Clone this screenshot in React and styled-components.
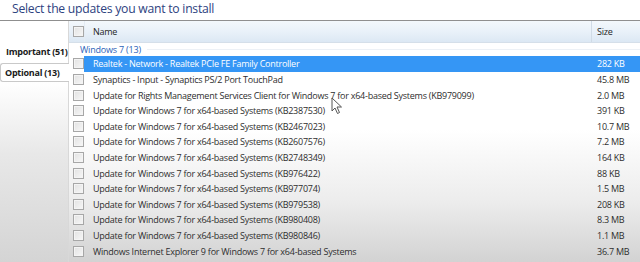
import React from "react";
import styled, { createGlobalStyle } from "styled-components";

const GlobalStyle = createGlobalStyle`
  html, body {
    margin: 0;
    padding: 0;
    background: #ffffff;
  }
  body {
    font-family: "Open Sans", "Noto Sans", sans-serif;
  }
`;

const Page = styled.div`
  position: relative;
  width: 640px;
  height: 262px;
  overflow: hidden;
  background: #fff;
`;

const Title = styled.div`
  height: 20px;
  padding-left: 12px;
  font-size: 12.2px;
  letter-spacing: -0.25px;
  line-height: 18px;
  color: #2d4280;
`;

const Body = styled.div`
  display: flex;
  height: 242px;
  border-top: 1px solid #8f8f8f;
`;

const Side = styled.div`
  width: 68px;
  flex-shrink: 0;
  padding-top: 21px;
  display: flex;
  flex-direction: column;
  gap: 2px;
  background: linear-gradient(to bottom, #ffffff 0%, #ffffff 25%, #e8e8e8 55%, #d4d4d4 100%);
  border-right: 1px solid #d8d8d8;
`;

const Tab = styled.div`
  height: 17px;
  padding-left: ${(p) => (p.$active ? "4px" : "5px")};
  font-size: 9px;
  letter-spacing: -0.25px;
  font-weight: 700;
  line-height: 17px;
  color: #1a1a1a;
  white-space: nowrap;
  background: ${(p) => (p.$active ? "#fff" : "transparent")};
  border: ${(p) => (p.$active ? "1px solid #c9c9c9" : "1px solid transparent")};
  border-right: none;
  border-radius: 3px 0 0 3px;
  margin-right: -1px;
`;

const List = styled.div`
  flex: 1;
  display: flex;
  flex-direction: column;
  background: linear-gradient(to bottom, #ffffff 0%, #ffffff 45%, #ececec 75%, #d2d2d2 100%);
`;

const Header = styled.div`
  display: flex;
  align-items: center;
  height: 21px;
  background: linear-gradient(to bottom, #f3f8fc 0%, #e9f1f9 50%, #dce8f4 100%);
  border-bottom: 1px solid #d5dfe9;
  font-size: 9px;
  letter-spacing: -0.25px;
  color: #1e1e1e;
`;

const CheckCell = styled.div`
  width: 16px;
  height: 100%;
  display: flex;
  align-items: center;
  padding-left: 4px;
  box-sizing: border-box;
  flex-shrink: 0;
  border-right: 1px solid ${(p) => (p.$header ? "#e4ecf4" : "transparent")};
`;

const NameCol = styled.div`
  flex: 1;
  padding-left: 8px;
  white-space: nowrap;
  overflow: hidden;
`;

const SizeCol = styled.div`
  width: 43px;
  flex-shrink: 0;
  padding-left: 5px;
  white-space: nowrap;
  border-left: 1px solid ${(p) => (p.$header ? "#d0dbe6" : "transparent")};
  height: 100%;
  display: flex;
  align-items: center;
`;

const Box = styled.span`
  display: block;
  width: 9px;
  height: 9px;
  border: 1px solid #a7a7a7;
  background: linear-gradient(135deg, #e2e2e2 0%, #f7f7f7 100%);
  box-shadow: inset 0 0 0 1px #f4f4f4;
`;

const Group = styled.div`
  display: flex;
  align-items: center;
  gap: 6px;
  height: 13px;
  padding-left: 11px;
  font-size: 9px;
  letter-spacing: -0.2px;
  color: #2a62b8;
  white-space: nowrap;

  &::after {
    content: "";
    flex: 1;
    height: 1px;
    background: #edf1f6;
  }
`;

const Row = styled.div`
  display: flex;
  align-items: center;
  height: 15.62px;
  font-size: 9px;
  letter-spacing: -0.25px;
  color: ${(p) => (p.$selected ? "#ffffff" : "#2e2e2e")};
`;

const RowFill = styled.div`
  flex: 1;
  display: flex;
  align-items: center;
  height: 100%;
  background: ${(p) => (p.$selected ? "#3596f5" : "transparent")};
  margin-left: -1px;

  ${NameCol} {
    padding-left: 9px;
  }
`;

const Cursor = styled.svg`
  position: absolute;
  left: 331px;
  top: 97px;
`;

const updates = [
  ["Realtek - Network - Realtek PCIe FE Family Controller", "282 KB"],
  ["Synaptics - Input - Synaptics PS/2 Port TouchPad", "45.8 MB"],
  ["Update for Rights Management Services Client for Windows 7 for x64-based Systems (KB979099)", "2.0 MB"],
  ["Update for Windows 7 for x64-based Systems (KB2387530)", "391 KB"],
  ["Update for Windows 7 for x64-based Systems (KB2467023)", "10.7 MB"],
  ["Update for Windows 7 for x64-based Systems (KB2607576)", "7.2 MB"],
  ["Update for Windows 7 for x64-based Systems (KB2748349)", "164 KB"],
  ["Update for Windows 7 for x64-based Systems (KB976422)", "88 KB"],
  ["Update for Windows 7 for x64-based Systems (KB977074)", "1.5 MB"],
  ["Update for Windows 7 for x64-based Systems (KB979538)", "208 KB"],
  ["Update for Windows 7 for x64-based Systems (KB980408)", "8.3 MB"],
  ["Update for Windows 7 for x64-based Systems (KB980846)", "1.1 MB"],
  ["Windows Internet Explorer 9 for Windows 7 for x64-based Systems", "36.7 MB"],
];

const App = () => {
  return (
    <Page>
      <GlobalStyle />
      <Title>Select the updates you want to install</Title>
      <Body>
        <Side>
          <Tab>Important (51)</Tab>
          <Tab $active>Optional (13)</Tab>
        </Side>
        <List>
          <Header>
            <CheckCell $header>
              <Box />
            </CheckCell>
            <NameCol>Name</NameCol>
            <SizeCol $header>Size</SizeCol>
          </Header>
          <Group>Windows 7 (13)</Group>
          {updates.map(([name, size], i) => (
            <Row key={i} $selected={i === 0}>
              <CheckCell>
                <Box />
              </CheckCell>
              <RowFill $selected={i === 0}>
                <NameCol>{name}</NameCol>
                <SizeCol>{size}</SizeCol>
              </RowFill>
            </Row>
          ))}
        </List>
      </Body>
      <Cursor width="12" height="18" viewBox="0 0 12 18">
        <path d="M1 1 L1 14 L4 11 L6.5 16.5 L8.5 15.5 L6 10 L10.5 10 Z" fill="#fff" stroke="#555" strokeWidth="1" strokeLinejoin="round" />
      </Cursor>
    </Page>
  );
};

export default App;
